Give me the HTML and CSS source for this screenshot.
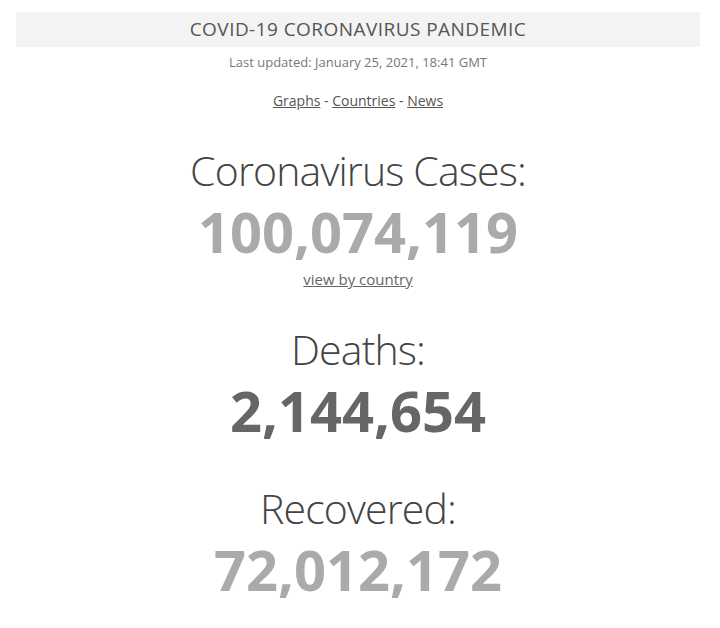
FILE: index.html
```html
<!DOCTYPE html>
<html>
<head>
<meta charset="utf-8">
<link rel="stylesheet" href="styles.css">
</head>
<body>
<div class="page">
  <div class="titlebar">COVID-19 CORONAVIRUS PANDEMIC</div>
  <div class="updated">Last updated: January 25, 2021, 18:41 GMT</div>
  <div class="nav"><a href="#">Graphs</a> - <a href="#">Countries</a> - <a href="#">News</a></div>
  <div class="counter cases">
    <h1>Coronavirus Cases:</h1>
    <div class="number">100,074,119</div>
    <a class="sub" href="#">view by country</a>
  </div>
  <div class="counter deaths">
    <h1>Deaths:</h1>
    <div class="number">2,144,654</div>
  </div>
  <div class="counter recovered">
    <h1>Recovered:</h1>
    <div class="number">72,012,172</div>
  </div>
</div>
</body>
</html>
```
FILE: styles.css
```css
html, body {
  margin: 0;
  padding: 0;
  background: #fff;
}
body {
  font-family: "Open Sans", "Noto Sans", sans-serif;
  color: #555;
}
.page {
  padding: 12px 20px 0 16px;
  display: flex;
  flex-direction: column;
  align-items: stretch;
  text-align: center;
}
.titlebar {
  background: #f3f3f3;
  height: 35px;
  line-height: 35px;
  font-size: 19px;
  letter-spacing: 0.45px;
  color: #555;
}
.updated {
  margin-top: 5px;
  font-size: 13px;
  line-height: 20px;
  color: #777;
}
.nav {
  margin-top: 19px;
  font-size: 14px;
  line-height: 20px;
  color: #555;
}
.nav a, .sub {
  color: #555;
  text-decoration: underline;
}
.counter {
  display: flex;
  flex-direction: column;
  align-items: center;
}
.counter h1 {
  margin: 0;
  font-weight: 300;
  font-size: 41px;
  letter-spacing: -0.85px;
  line-height: 50px;
  color: #444;
}
.number {
  margin-top: -2px;
  font-weight: 700;
  font-size: 56px;
  line-height: 76px;
  color: #aaa;
}
.cases { margin-top: 34px; }
.sub {
  font-size: 15px;
  line-height: 20px;
  color: #666;
}
.deaths { margin-top: 35px; }
.deaths .number { color: #666; }
.recovered { margin-top: 35px; }
```
